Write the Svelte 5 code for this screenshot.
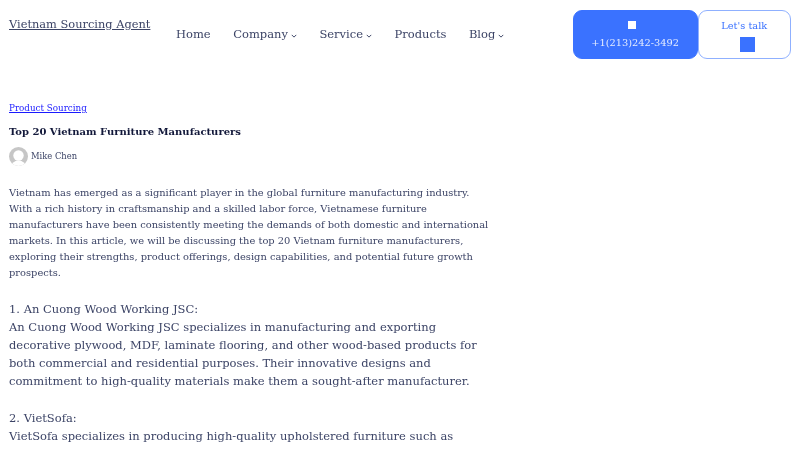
<script>
  const navItems = [
    { label: "Home" },
    { label: "Company", caret: true },
    { label: "Service", caret: true },
    { label: "Products" },
    { label: "Blog", caret: true },
  ];
</script>

<header class="site-header">
  <a class="logo" href="#top">Vietnam Sourcing Agent</a>
  <nav class="nav">
    {#each navItems as item}
      <span class="nav-item">
        {item.label}{#if item.caret}<svg class="caret" viewBox="0 0 8 5" width="6" height="4">
            <path d="M1 1l3 3 3-3" fill="none" stroke="currentColor" stroke-width="1.3" />
          </svg>{/if}
      </span>
    {/each}
  </nav>
  <div class="actions">
    <a class="btn btn-primary" href="#call">
      <span class="square small"></span>
      <span>+1(213)242-3492</span>
    </a>
    <a class="btn btn-outline" href="#talk">
      <span>Let's talk</span>
      <span class="square big"></span>
    </a>
  </div>
</header>

<main class="post">
  <a class="category" href="#cat">Product Sourcing</a>
  <h1 class="title">Top 20 Vietnam Furniture Manufacturers</h1>
  <div class="author">
    <svg class="avatar" viewBox="0 0 19 19" width="19" height="19">
      <defs>
        <clipPath id="avatar-clip"><circle cx="9.5" cy="9.5" r="9.5" /></clipPath>
      </defs>
      <g clip-path="url(#avatar-clip)">
        <rect width="19" height="19" fill="#c6c6c6" />
        <circle cx="9.5" cy="8.5" r="5.2" fill="#fff" />
        <ellipse cx="9.5" cy="20" rx="7.5" ry="6.5" fill="#fff" />
      </g>
    </svg>
    <span class="author-name">Mike Chen</span>
  </div>

  <p class="intro">
    Vietnam has emerged as a significant player in the global furniture manufacturing industry. With a rich history in craftsmanship and a skilled labor force, Vietnamese furniture manufacturers have been consistently meeting the demands of both domestic and international markets. In this article, we will be discussing the top 20 Vietnam furniture manufacturers, exploring their strengths, product offerings, design capabilities, and potential future growth prospects.
  </p>

  <p class="entry">
    1. An Cuong Wood Working JSC:<br />
    An Cuong Wood Working JSC specializes in manufacturing and exporting decorative plywood, MDF, laminate flooring, and other wood-based products for both commercial and residential purposes. Their innovative designs and commitment to high-quality materials make them a sought-after manufacturer.
  </p>

  <p class="entry">
    2. VietSofa:<br />
    VietSofa specializes in producing high-quality upholstered furniture such as sofas, chairs, and beds. Their products are known for their durability and
  </p>
</main>

<style>
  :global(body) {
    margin: 0;
    background: #fff;
    height: 450px;
    overflow: hidden;
    font-family: "DejaVu Serif", serif;
    filter: blur(0.25px);
  }

  .site-header {
    display: flex;
    align-items: flex-start;
    height: 69px;
    padding: 10px 9px 0 9px;
    box-sizing: border-box;
  }

  .logo {
    font-size: 11.4px;
    line-height: 28px;
    color: #3c4466;
    width: 167px;
    flex: none;
  }

  .nav {
    display: flex;
    gap: 22.5px;
    width: 396.6px;
    flex: none;
    padding-top: 15px;
    font-size: 11.5px;
    line-height: 18px;
    color: #3c4466;
  }

  .caret {
    margin-left: 3px;
  }

  .actions {
    display: flex;
  }

  .btn {
    display: flex;
    flex-direction: column;
    align-items: center;
    justify-content: center;
    height: 49px;
    box-sizing: border-box;
    border-radius: 9px;
    border: 1px solid #3a72ff;
    font-size: 9.8px;
    line-height: 16px;
    text-decoration: none;
  }

  .btn-primary {
    width: 125px;
    gap: 6px;
    padding-top: 2px;
    background: #3a72ff;
    color: #e6edff;
  }

  .btn-outline {
    width: 93.4px;
    gap: 3px;
    background: #fff;
    color: #3a72ff;
    border-color: #8fb0ff;
  }

  .square {
    display: block;
    flex: none;
  }

  .square.small {
    width: 8px;
    height: 8px;
    margin-right: 7px;
    background: #fff;
  }

  .square.big {
    width: 15px;
    height: 15px;
    margin-left: 6px;
    background: #3a72ff;
  }

  .post {
    width: 480px;
    padding: 32px 0 0 9px;
  }

  .category {
    display: block;
    font-size: 8.75px;
    line-height: 14px;
    color: #1a1aff;
  }

  .title {
    margin: 9px 0 0;
    font-size: 10px;
    line-height: 16px;
    font-weight: 700;
    color: #12183a;
  }

  .author {
    display: flex;
    align-items: center;
    gap: 3px;
    margin-top: 7px;
    font-size: 8.4px;
    color: #3c4466;
  }

  .author-name {
    padding-bottom: 2px;
  }

  .avatar {
    flex: none;
  }

  .intro {
    margin: 19px 0 0;
    font-size: 9.9px;
    line-height: 16px;
    color: #3c4466;
  }

  .entry {
    margin: 19px 0 0;
    font-size: 11.5px;
    line-height: 18px;
    color: #3c4466;
  }
</style>
